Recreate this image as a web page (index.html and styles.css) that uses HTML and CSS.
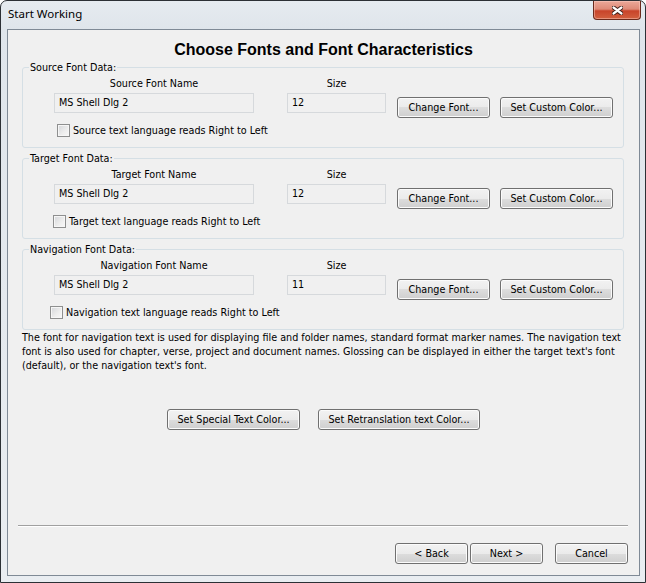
FILE: index.html
```html
<!DOCTYPE html>
<html lang="en">
<head>
<meta charset="utf-8">
<title>Start Working</title>
<link rel="stylesheet" href="styles.css">
</head>
<body>
<div class="window">
  <div class="titlebar">
    <span class="title">Start Working</span>
    <div class="close">
      <svg width="11" height="9" viewBox="0 0 11 9">
        <path d="M1.5 1.5 L9.5 7.5 M9.5 1.5 L1.5 7.5" stroke="#3d1d16" stroke-width="4.2" stroke-linecap="round" fill="none"/>
        <path d="M1.5 1.5 L9.5 7.5 M9.5 1.5 L1.5 7.5" stroke="#ffffff" stroke-width="2.2" stroke-linecap="round" fill="none"/>
      </svg>
    </div>
  </div>
  <div class="client">
    <h1 class="heading">Choose Fonts and Font Characteristics</h1>

    <fieldset class="group">
      <legend>Source Font Data:</legend>
      <div class="grid">
        <div class="colhead name">Source Font Name</div>
        <div class="colhead size">Size</div>
        <div class="field name">MS Shell Dlg 2</div>
        <div class="field size">12</div>
        <button class="btn change">Change Font...</button>
        <button class="btn color">Set Custom Color...</button>
        <label class="check c1"><span class="box"></span>Source text language reads Right to Left</label>
      </div>
    </fieldset>

    <fieldset class="group">
      <legend>Target Font Data:</legend>
      <div class="grid">
        <div class="colhead name">Target Font Name</div>
        <div class="colhead size">Size</div>
        <div class="field name">MS Shell Dlg 2</div>
        <div class="field size">12</div>
        <button class="btn change">Change Font...</button>
        <button class="btn color">Set Custom Color...</button>
        <label class="check c2"><span class="box"></span>Target text language reads Right to Left</label>
      </div>
    </fieldset>

    <fieldset class="group">
      <legend>Navigation Font Data:</legend>
      <div class="grid">
        <div class="colhead name">Navigation Font Name</div>
        <div class="colhead size">Size</div>
        <div class="field name">MS Shell Dlg 2</div>
        <div class="field size">11</div>
        <button class="btn change">Change Font...</button>
        <button class="btn color">Set Custom Color...</button>
        <label class="check c3"><span class="box"></span>Navigation text language reads Right to Left</label>
      </div>
    </fieldset>

    <p class="desc">The font for navigation text is used for displaying file and folder names, standard format marker names. The navigation text<br>font is also used for chapter, verse, project and document names. Glossing can be displayed in either the target text's font<br>(default), or the navigation text's font.</p>

    <div class="special">
      <button class="btn sp1">Set Special Text Color...</button>
      <button class="btn sp2">Set Retranslation text Color...</button>
    </div>

    <div class="spacer"></div>
    <div class="sep"></div>
    <div class="footer">
      <button class="btn nav back">&lt; Back</button>
      <button class="btn nav next">Next &gt;</button>
      <button class="btn nav cancel">Cancel</button>
    </div>
  </div>
</div>
</body>
</html>
```

FILE: styles.css
```css
* { box-sizing: border-box; }
html, body { margin: 0; padding: 0; }
body {
  width: 646px;
  height: 583px;
  overflow: hidden;
  background: #ffffff;
  font-family: "DejaVu Sans Condensed", "DejaVu Sans", sans-serif;
  font-size: 10.7px;
  color: #000;
}
.window {
  width: 646px;
  height: 583px;
  border: 1px solid #2c3035;
  border-radius: 7px 7px 0 0;
  background: linear-gradient(180deg, #e6ebf0 0px, #dfe5eb 28px, #e9edf1 100%);
  display: flex;
  flex-direction: column;
  padding: 0 5px 6px 6px;
}
.titlebar {
  height: 28px;
  flex: none;
  display: flex;
  align-items: flex-start;
}
.title {
  font-family: "Noto Sans", "Open Sans", sans-serif;
  font-size: 11.5px;
  line-height: 16px;
  padding-top: 5px;
  padding-left: 1px;
  color: #000;
}
.close {
  margin-left: auto;
  margin-right: -1px;
  width: 48px;
  height: 19px;
  border: 1px solid #6b2a1c;
  border-top: none;
  border-radius: 0 0 4px 4px;
  background: linear-gradient(180deg, #eba899 0%, #de8a77 45%, #c8442a 55%, #d2603f 100%);
  box-shadow: inset 0 0 0 1px rgba(255, 210, 200, 0.45);
  display: flex;
  align-items: center;
  justify-content: center;
}
.close svg { display: block; }
.client {
  flex: 1;
  border: 1px solid #7f8a96;
  background: #f0f0f0;
  display: flex;
  flex-direction: column;
}
.heading {
  margin: 10px 0 0;
  font-family: "Liberation Sans", Arial, sans-serif;
  font-weight: bold;
  font-size: 16px;
  line-height: 19px;
  text-align: center;
}
.group {
  margin: 2px 15px 0 14px;
  padding: 0 0 10px 6px;
  border: 1px solid #d5dfe5;
  border-radius: 3px;
  min-width: 0;
}
.group + .group { margin-top: 4px; }
.group legend {
  padding: 0 1px;
  line-height: 13px;
}
.grid {
  margin-left: 25px;
  padding-top: 3px;
  display: grid;
  grid-template-columns: 200px 132px 104px 123px;
  grid-template-rows: 13px 25px auto;
  row-gap: 3px;
}
.colhead { line-height: 13px; white-space: nowrap; }
.colhead.name { grid-column: 1; grid-row: 1; text-align: center; }
.colhead.size { grid-column: 2; grid-row: 1; justify-self: end; width: 99px; text-align: center; }
.field {
  height: 20px;
  border: 1px solid #d6d9dc;
  background: #f0f0f0;
  padding-left: 4px;
  line-height: 18px;
  white-space: nowrap;
  align-self: start;
}
.field.name { grid-column: 1; grid-row: 2; }
.field.size { grid-column: 2; grid-row: 2; justify-self: end; width: 99px; }
.btn {
  height: 21px;
  border: 1px solid #707070;
  border-radius: 3px;
  background: linear-gradient(180deg, #f2f2f2 0%, #ebebeb 50%, #dddddd 50%, #cfcfcf 100%);
  box-shadow: inset 0 0 0 1px #fbfbfb;
  font: inherit;
  color: #000;
  padding: 0;
  line-height: 19px;
  text-align: center;
  white-space: nowrap;
}
.btn.change { grid-column: 3; grid-row: 2; justify-self: end; align-self: start; width: 93px; margin-top: 4px; }
.btn.color { grid-column: 4; grid-row: 2; justify-self: end; align-self: start; width: 113px; margin-top: 4px; }
.check {
  grid-column: 1 / -1;
  grid-row: 3;
  margin-top: 3px;
  height: 13px;
  display: flex;
  align-items: center;
  gap: 3px;
  line-height: 13px;
  white-space: nowrap;
}
.check.c1 { margin-left: 3px; }
.check.c2 { margin-left: -1px; }
.check.c3 { margin-left: -4px; }
.box {
  width: 13px;
  height: 13px;
  flex: none;
  border: 1px solid #8e8f8f;
  background: linear-gradient(135deg, #d4d6d9 0%, #eeeeee 60%, #f8f8f8 100%);
  box-shadow: inset 0 0 0 1px #f6f6f6;
}
.desc {
  margin: 1px 14px 0 14px;
  line-height: 14px;
  white-space: nowrap;
}
.special {
  display: flex;
  justify-content: center;
  gap: 18px;
  margin-top: 36px;
}
.btn.sp1 { width: 133px; }
.btn.sp2 { width: 162px; }
.spacer { flex: 1; }
.sep {
  margin: 0 11px 16px 10px;
  height: 2px;
  border-top: 1px solid #a0a0a0;
  border-bottom: 1px solid #ffffff;
}
.footer {
  display: flex;
  justify-content: flex-end;
  padding: 0 11px 11px 0;
}
.btn.nav { width: 73px; }
.btn.next { margin-left: 2px; }
.btn.cancel { margin-left: 12px; }
```
